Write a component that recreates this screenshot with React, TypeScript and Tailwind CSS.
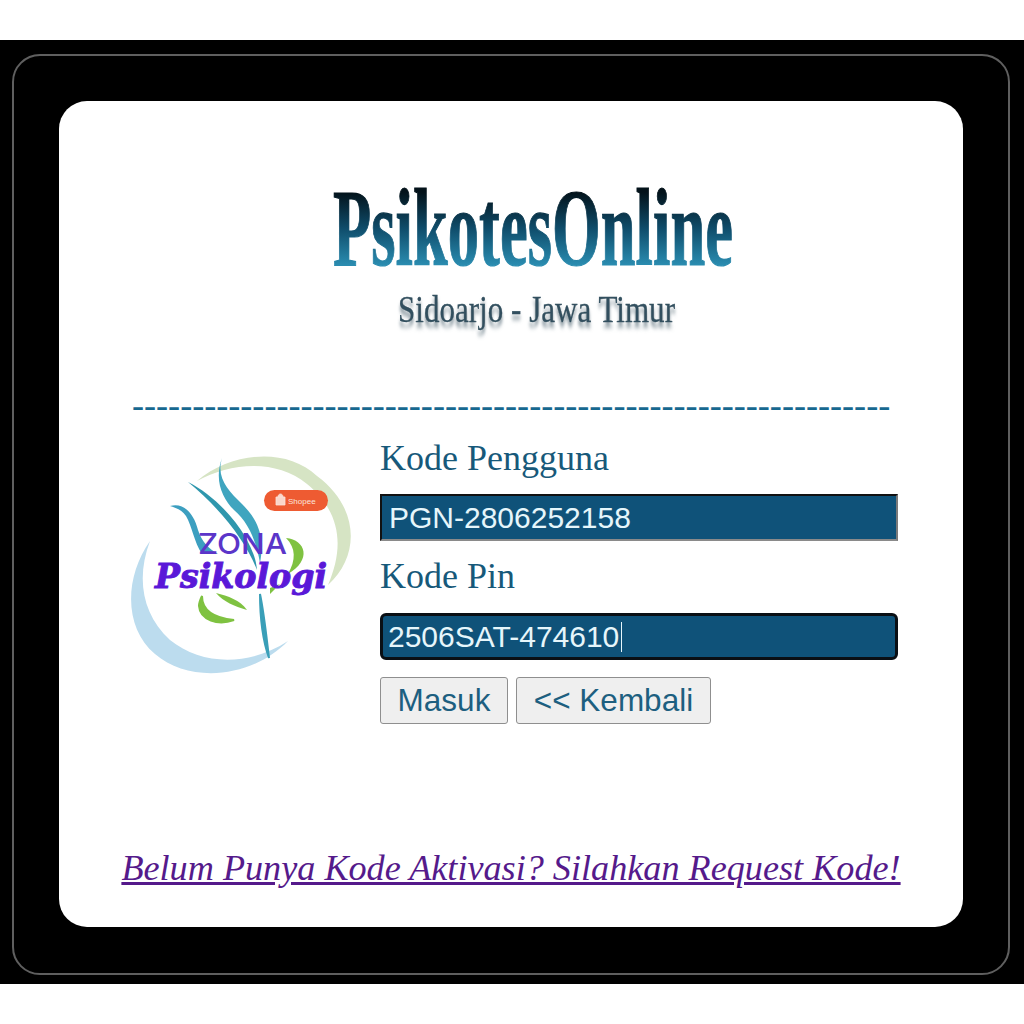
export default function App() {
  return (
    <div className="h-[1024px] bg-white pt-[40px]">
      <div className="h-[944px] bg-black pl-[12px] pt-[14px]">
        <div className="h-[921px] w-[998px] rounded-[28px] border-2 border-[#5f5f5f] p-[45px]">
          <div className="h-[826px] w-[904px] rounded-[28px] bg-white pl-[51px] pt-[69px] font-['Liberation_Serif',serif] text-[#17597a]">
            <LogoTitle />
            <div className="ml-[22px] mt-[27px] h-[36px] whitespace-nowrap text-[36.15px] leading-[36px] text-[#17688f]">
              {'-'.repeat(63)}
            </div>
            <div className="mt-[11px] flex gap-[10px]">
              <ZonaLogo />
              <LoginForm />
            </div>
            <a
              href="#"
              className="-ml-[51px] mt-[123px] block w-[904px] text-center text-[36.2px] italic leading-[42px] text-[#551a8b] underline"
            >
              Belum Punya Kode Aktivasi? Silahkan Request Kode!
            </a>
          </div>
        </div>
      </div>
    </div>
  );
}

function LogoTitle() {
  return (
    <svg width="460" height="190" viewBox="0 0 460 190" className="ml-[190px] block overflow-visible">
      <defs>
        <linearGradient id="titleFill" gradientUnits="userSpaceOnUse" x1="0" y1="22" x2="0" y2="95">
          <stop offset="0" stopColor="#03121a" />
          <stop offset="0.5" stopColor="#0f4d6b" />
          <stop offset="1" stopColor="#2a8cb0" />
        </linearGradient>
        <filter id="subShadow" x="-5%" y="-30%" width="110%" height="180%">
          <feDropShadow dx="0" dy="5" stdDeviation="1.5 2.5" floodColor="#7d8d96" />
        </filter>
      </defs>
      <text
        x="33"
        y="95"
        fontSize="111"
        fontWeight="700"
        textLength="400"
        lengthAdjust="spacingAndGlyphs"
        fill="url(#titleFill)"
        stroke="url(#titleFill)"
        strokeWidth="1.2"
      >
        PsikotesOnline
      </text>
      <text
        x="98"
        y="152"
        fontSize="38"
        textLength="277"
        lengthAdjust="spacingAndGlyphs"
        fill="#33505f"
        stroke="#33505f"
        strokeWidth="0.3"
        filter="url(#subShadow)"
      >
        Sidoarjo - Jawa Timur
      </text>
    </svg>
  );
}

function ZonaLogo() {
  return (
    <svg width="260" height="250" viewBox="0 0 260 250" className="mt-[4px] shrink-0">
      {/* outer arcs */}
      <path d="M87 43C120 15 175 8 207 38C250 70 250 118 218 147C234 110 232 75 197 46C165 20 120 25 87 43Z" fill="#d6e4c4" />
      <path d="M40 103C14 140 14 190 45 216C80 246 142 240 178 203C140 228 92 228 60 202C32 176 26 140 40 103Z" fill="#bcdcee" />
      {/* teal strands */}
      <path d="M112 20C106 40 118 52 132 66C148 82 155 98 150 125C146 102 138 84 124 72C112 60 104 42 112 20Z" fill="#3fa5bf" />
      <path d="M78 44C100 55 122 76 136 100C142 112 146 120 147 132C136 104 112 72 78 44Z" fill="#2f97ad" />
      <path d="M60 68C74 64 84 76 88 92C92 104 98 110 108 116L92 116C84 104 82 88 76 78C72 72 66 70 60 68Z" fill="#3c9fc0" />
      <path d="M150 156C154 175 156 195 159 220C152 200 150 175 150 156Z" fill="#3a9fb8" stroke="#3a9fb8" strokeWidth="2" />
      {/* green leaves */}
      <path d="M176 100C196 102 202 122 178 136C186 122 186 110 176 100Z" fill="#7fc241" />
      <path d="M92 158C92 172 104 180 124 182C108 188 90 182 89 168C89 164 90 162 92 158Z" fill="#7fc241" stroke="#7fc241" strokeWidth="2" />
      <path d="M106 155C118 158 130 162 137 172C124 168 114 164 106 155Z" fill="#7fc241" />
      <path d="M160 150L170 146L160 156Z" fill="#7fc241" />
      {/* shopee badge */}
      <rect x="154" y="52" width="64" height="21" rx="10.5" fill="#ee5b32" />
      <path d="M166 59H175V67H166ZM168 59C168 55 173 55 173 59" fill="#fbe3da" stroke="#fbe3da" strokeWidth="0.8" fillOpacity="0.9" />
      <text x="178" y="66" fontSize="8" fontFamily="Liberation Sans, sans-serif" fill="#fbe3da">
        Shopee
      </text>
      {/* wordmark */}
      <text
        x="88"
        y="116"
        fontSize="29"
        fontWeight="500"
        fontFamily="Inter, sans-serif"
        textLength="89"
        lengthAdjust="spacingAndGlyphs"
        fill="#5b35c9"
      >
        ZONA
      </text>
      <text
        x="45"
        y="150"
        fontSize="33"
        fontWeight="700"
        fontStyle="italic"
        fontFamily="DejaVu Serif, serif"
        textLength="172"
        lengthAdjust="spacingAndGlyphs"
        fill="#5a18d8"
        stroke="#5a18d8"
        strokeWidth="1"
      >
        Psikologi
      </text>
    </svg>
  );
}

function LoginForm() {
  const fieldText = "font-['Liberation_Sans',sans-serif] text-[30px] text-[#e6f6fb]";
  const buttonClass =
    "h-[47px] rounded-[3px] border border-[#8f8f8f] bg-[#efefef] font-['Liberation_Sans',sans-serif] text-[31.5px] leading-none text-[#1d5f80]";

  return (
    <form className="mt-[3px] w-[518px]">
      <label className="block text-[36px] leading-[42px]">Kode Pengguna</label>
      <input
        readOnly
        value="PGN-2806252158"
        className={`mt-[15px] block h-[47px] w-[518px] border-2 border-b-[#8a8a8a] border-l-[#111] border-r-[#7a7a7a] border-t-[#111] bg-[#0f5279] px-[7px] outline-none ${fieldText}`}
      />
      <label className="mt-[14px] block text-[36px] leading-[42px]">Kode Pin</label>
      <div className="relative mt-[16px] h-[47px] w-[518px]">
        <input
          readOnly
          value="2506SAT-474610"
          className={`block h-[47px] w-full rounded-[6px] border-[3px] border-[#0a0f14] bg-[#0f5279] px-[5px] outline-none ${fieldText}`}
        />
        <span className="absolute left-[241px] top-[9px] h-[30px] w-px bg-[#e6f6fb]" />
      </div>
      <div className="mt-[17px] flex gap-[8px]">
        <button type="button" className={`w-[128px] ${buttonClass}`}>
          Masuk
        </button>
        <button type="button" className={`w-[195px] ${buttonClass}`}>
          &lt;&lt; Kembali
        </button>
      </div>
    </form>
  );
}
